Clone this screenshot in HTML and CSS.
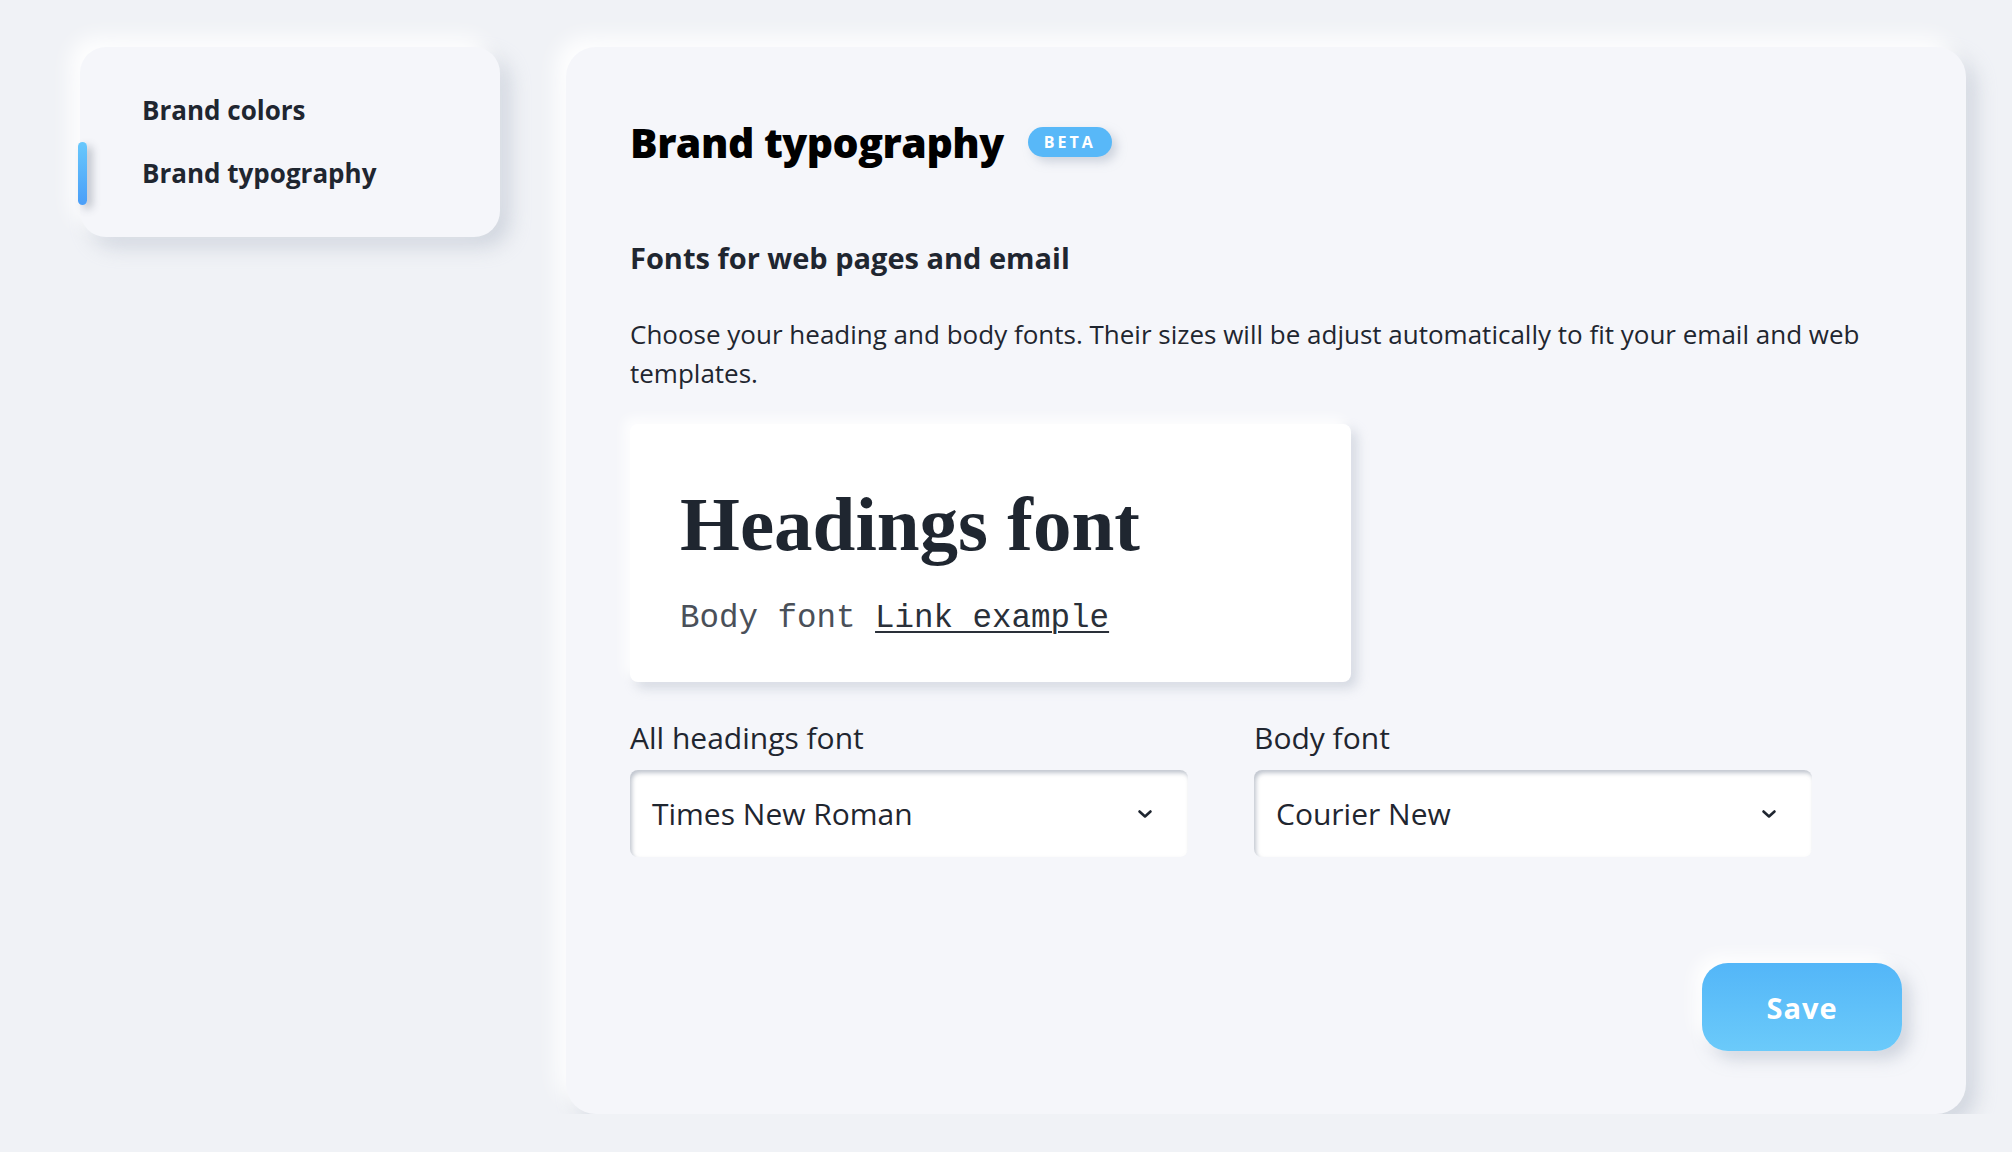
FILE: index.html
```html
<!DOCTYPE html>
<html lang="en">
<head>
    <meta charset="UTF-8">
    <meta name="viewport" content="width=device-width, initial-scale=1.0">
    <title>Brand typography</title>
    <link rel="stylesheet" href="styles.css">
</head>
<body>
    <div class="layout">
        <nav class="side-nav">
            <a class="nav-item" href="#">Brand colors</a>
            <a class="nav-item active" href="#">Brand typography</a>
        </nav>

        <main class="panel">
            <div class="panel-head">
                <h1>Brand typography</h1>
                <span class="badge">BETA</span>
            </div>

            <h2>Fonts for web pages and email</h2>
            <p class="hint">Choose your heading and body fonts. Their sizes will be adjust automatically to fit your email and web templates.</p>

            <div class="preview">
                <div class="preview-heading">Headings font</div>
                <div class="preview-body">Body font <a href="#">Link example</a></div>
            </div>

            <div class="font-fields">
                <div class="field">
                    <label>All headings font</label>
                    <div class="select">
                        <span>Times New Roman</span>
                        <svg width="16" height="10" viewBox="0 0 16 10"><path d="M2.5 2.5l5.5 5 5.5-5" fill="none" stroke="#1f2630" stroke-width="2.6" stroke-linecap="round" stroke-linejoin="round"/></svg>
                    </div>
                </div>
                <div class="field">
                    <label>Body font</label>
                    <div class="select">
                        <span>Courier New</span>
                        <svg width="16" height="10" viewBox="0 0 16 10"><path d="M2.5 2.5l5.5 5 5.5-5" fill="none" stroke="#1f2630" stroke-width="2.6" stroke-linecap="round" stroke-linejoin="round"/></svg>
                    </div>
                </div>
            </div>

            <button class="save-btn" type="button">Save</button>
        </main>
    </div>
</body>
</html>
```

FILE: styles.css
```css
body {
    margin: 0;
    background-color: #f0f2f6;
    font-family: "Open Sans", Lato, sans-serif;
    color: #1f2630;
}

.layout {
    display: flex;
    align-items: flex-start;
    gap: 66px;
    padding: 47px 0 0 80px;
}

/* left menu */
.side-nav {
    width: 420px;
    box-sizing: border-box;
    padding: 32px 0;
    display: flex;
    flex-direction: column;
    background-color: #f5f6fa;
    border-radius: 26px;
    box-shadow: -10px -10px 20px rgba(255, 255, 255, 0.95), 10px 10px 20px rgba(170, 180, 196, 0.45);
}

.nav-item {
    position: relative;
    padding-left: 62px;
    line-height: 63px;
    font-size: 26px;
    font-weight: 700;
    color: #1f2630;
    text-decoration: none;
}

.nav-item.active::before {
    content: "";
    position: absolute;
    left: -2px;
    top: 0;
    width: 9px;
    height: 63px;
    border-radius: 5px;
    background: linear-gradient(#68c8fc, #4a9ef8);
    box-shadow: 5px 4px 8px rgba(60, 70, 90, 0.3);
}

/* main panel */
.panel {
    width: 1400px;
    height: 1067px;
    box-sizing: border-box;
    padding: 69px 64px 63px 64px;
    display: flex;
    flex-direction: column;
    background-color: #f5f6fa;
    border-radius: 30px;
    box-shadow: -10px -10px 20px rgba(255, 255, 255, 0.95), 10px 10px 20px rgba(170, 180, 196, 0.45);
}

.panel-head {
    display: flex;
    align-items: center;
    gap: 24px;
}

h1 {
    margin: 0;
    font-size: 41px;
    font-weight: 800;
    line-height: 52px;
    letter-spacing: -0.5px;
    color: #000;
}

.badge {
    height: 30px;
    padding: 0 16px;
    display: flex;
    align-items: center;
    border-radius: 15px;
    background-color: #58b8f8;
    color: white;
    font-size: 16px;
    font-weight: 700;
    letter-spacing: 3px;
    box-shadow: 5px 5px 10px rgba(170, 180, 196, 0.5);
}

h2 {
    margin: 72px 0 0;
    font-size: 29px;
    font-weight: 700;
    line-height: 35px;
}

.hint {
    margin: 40px 0 0;
    font-size: 26px;
    line-height: 39px;
}

/* font preview */
.preview {
    width: 721px;
    box-sizing: border-box;
    margin-top: 31px;
    padding: 55px 50px 43px;
    background-color: white;
    border-radius: 8px;
    box-shadow: -6px -6px 12px rgba(255, 255, 255, 0.9), 6px 6px 12px rgba(170, 180, 196, 0.45);
}

.preview-heading {
    font-family: "Liberation Serif", "Times New Roman", serif;
    font-size: 77px;
    font-weight: 700;
    line-height: 90px;
    color: #1f2630;
}

.preview-body {
    margin-top: 30px;
    font-family: "Liberation Mono", "Courier New", monospace;
    font-size: 32.5px;
    line-height: 40px;
    color: #4a5059;
}

.preview-body a {
    color: #2a3039;
    text-decoration-thickness: 2px;
    text-underline-offset: 4px;
}

/* selects */
.font-fields {
    display: grid;
    grid-template-columns: 558px 558px;
    gap: 66px;
    margin-top: 38px;
}

.field label {
    display: block;
    font-size: 30px;
    line-height: 36px;
}

.select {
    height: 87px;
    margin-top: 14px;
    padding: 0 35px 0 22px;
    display: flex;
    align-items: center;
    justify-content: space-between;
    background-color: white;
    border-radius: 8px;
    box-shadow: inset 2px 3px 4px rgba(140, 150, 166, 0.55);
    font-size: 30px;
}

.save-btn {
    margin-top: auto;
    align-self: flex-end;
    width: 200px;
    height: 88px;
    border: none;
    border-radius: 26px;
    background: linear-gradient(#53b6f8, #6bcafa);
    color: white;
    font-family: inherit;
    font-size: 29px;
    font-weight: 700;
    letter-spacing: 1px;
    cursor: pointer;
    box-shadow: -8px -8px 16px rgba(255, 255, 255, 0.95), 8px 8px 16px rgba(170, 180, 196, 0.5);
}
```
